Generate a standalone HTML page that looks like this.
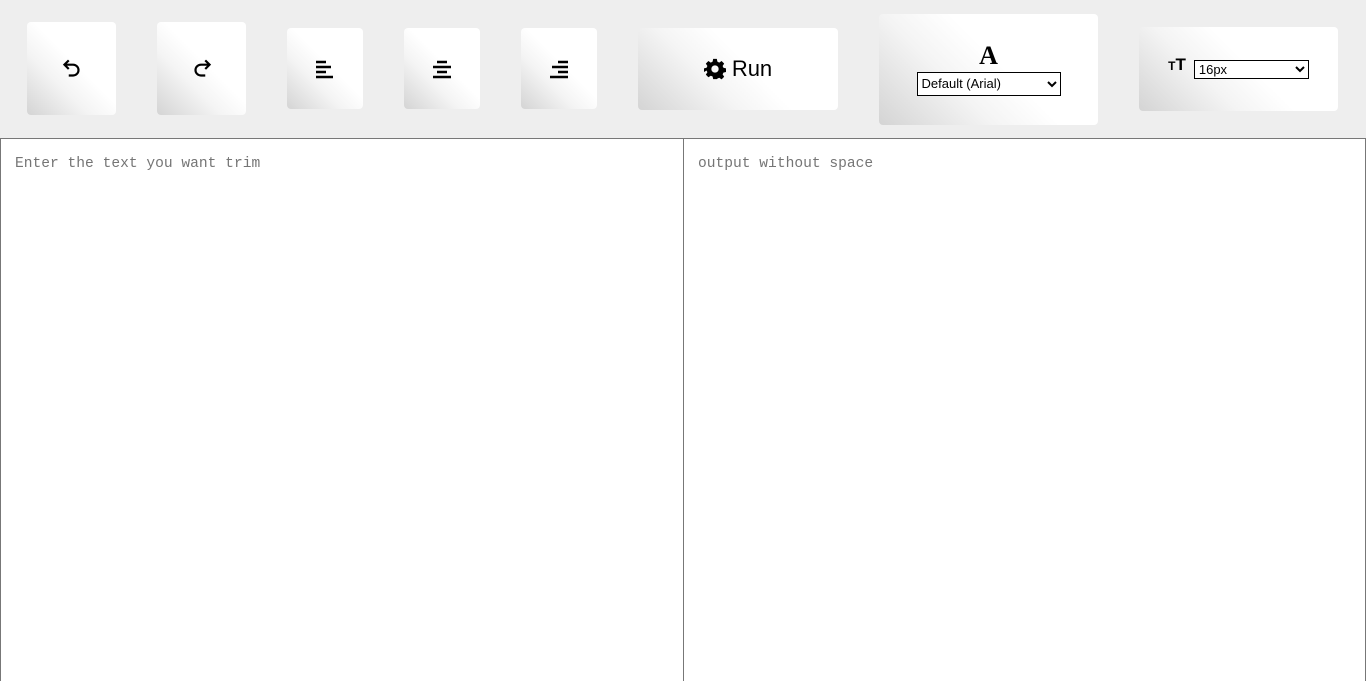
<!DOCTYPE html>
<html><head><style>
html,body{margin:0;height:681px;overflow:hidden}
body{background:#eee;width:1366px;font-family:"Liberation Sans",Arial,sans-serif;position:relative}
.b{position:absolute;border-radius:4px;background:linear-gradient(45deg,#d4d4d4 0%,#f4f4f4 35%,#fff 55%,#fff 100%);display:flex;align-items:center;justify-content:center;box-sizing:border-box}
.ta{position:absolute;top:138px;height:543px;background:#fff;border:1px solid #777;border-bottom:none;box-sizing:border-box;font-family:"Liberation Mono",monospace;font-size:14.6px;color:#757575;padding:17px 14px}
select{font-family:"Liberation Sans",Arial,sans-serif;font-size:13px;border:1px solid #000;background:#fff;border-radius:0;height:24px}
</style></head><body>
<div class="b" style="left:27px;top:22px;width:89px;height:93px"><svg width="26" height="26" viewBox="0 0 24 24" fill="none" stroke="#000" stroke-width="2"><path d="M9 4L5 8l4 4M5 8h8a5 5 0 0 1 0 10H9"/></svg></div>
<div class="b" style="left:157px;top:22px;width:89px;height:93px"><svg width="26" height="26" viewBox="0 0 24 24" fill="none" stroke="#000" stroke-width="2"><path d="M15 4l4 4-4 4M19 8h-8a5 5 0 0 0 0 10h4"/></svg></div>
<div class="b" style="left:287px;top:28px;width:76px;height:81px"><svg width="22" height="22" viewBox="0 0 22 22" stroke="#000" stroke-width="2.4"><path d="M2 4h10M2 9h15M2 14h10M2 19h17"/></svg></div>
<div class="b" style="left:404px;top:28px;width:76px;height:81px"><svg width="22" height="22" viewBox="0 0 22 22" stroke="#000" stroke-width="2.4"><path d="M6 4h10M2 9h18M6 14h10M2 19h18"/></svg></div>
<div class="b" style="left:521px;top:28px;width:76px;height:81px"><svg width="22" height="22" viewBox="0 0 22 22" stroke="#000" stroke-width="2.4"><path d="M10 4h10M4 9h16M10 14h10M2 19h18"/></svg></div>
<div class="b" style="left:638px;top:28px;width:200px;height:82px;font-size:22px"><svg width="22" height="22" viewBox="0 0 24 24" style="margin-right:6px"><path fill="#000" fill-rule="evenodd" d="M10 1h4l.6 3 2 1 2.6-1.7 2.8 2.8L20.3 8.7l.9 2 2.8.6v4l-2.8.6-.9 2 1.7 2.6-2.8 2.8-2.6-1.7-2 .9L14 23h-4l-.6-2.8-2-.9-2.6 1.7-2.8-2.8 1.7-2.6-.9-2L0 15.3v-4l2.8-.6.9-2L2 6.1l2.8-2.8L7.4 5l2-1zM12 8a4 4 0 1 0 0 8 4 4 0 1 0 0-8z"/></svg>Run</div>
<div class="b" style="left:879px;top:14px;width:219px;height:111px;flex-direction:column"><div style="font-family:'Liberation Serif',serif;font-weight:bold;font-size:26px;line-height:24px;margin-bottom:4px">A</div><select style="width:144px"><option>Default (Arial)</option></select></div>
<div class="b" style="left:1139px;top:27px;width:199px;height:84px;align-items:flex-start;padding-top:33px"><span style="font-weight:bold;font-size:17px;line-height:16px;margin-right:8px;margin-top:-3px"><span style="font-size:12px">T</span>T</span><select style="width:115px;height:19px;font-size:13px"><option>16px</option></select></div>
<div class="ta" style="left:0;width:684px">Enter the text you want trim</div>
<div class="ta" style="left:683px;width:683px">output without space</div>
</body></html>
